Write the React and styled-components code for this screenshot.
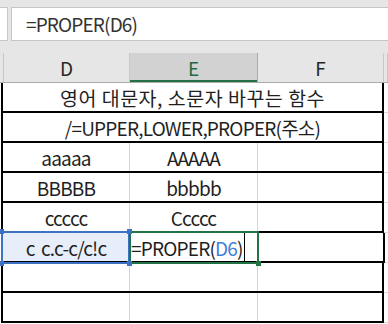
import React from "react";
import styled, { createGlobalStyle, css } from "styled-components";

const GlobalStyle = createGlobalStyle`
  body {
    margin: 0;
    background: #ffffff;
    font-family: "Noto Sans CJK KR", sans-serif;
  }
`;

const Page = styled.div`
  width: 388px;
  height: 324px;
  overflow: hidden;
  background: #ffffff;
`;

const FormulaArea = styled.div`
  display: flex;
  gap: 3px;
  height: 53px;
  padding-top: 7px;
  box-sizing: border-box;
  background: #e6e6e6;
`;

const NameStub = styled.div`
  width: 8px;
  height: 34px;
  box-sizing: border-box;
  background: #fff;
  border: 1px solid #c6c6c6;
  border-left: none;
`;

const FormulaInput = styled.div`
  flex: 1;
  height: 34px;
  box-sizing: border-box;
  background: #fff;
  border: 1px solid #c6c6c6;
  border-right: none;
  padding-left: 14px;
  font-size: 19px;
  letter-spacing: -0.85px;
  line-height: 32px;
  color: #333;
`;

const HeaderRow = styled.div`
  display: flex;
  height: 29px;
  background: #e6e6e6;
  border-bottom: 1px solid #ababab;
`;

const HeadCell = styled.div`
  width: ${(p) => p.$w}px;
  flex: ${(p) => (p.$grow ? 1 : "none")};
  border-right: 1px solid #c8c8c8;
  display: flex;
  align-items: center;
  justify-content: center;
  font-size: 19px;
  color: #262626;
  ${(p) =>
    p.$selected &&
    css`
      background: #d2d2d2;
      color: #1e6b41;
      box-shadow: inset 0 -2px 0 #217346;
      border-right-color: #aaaaaa;
    `}
`;

const Row = styled.div`
  display: flex;
  height: 30px;
`;

const TableRow = styled.div`
  display: flex;
  margin-left: 1px;
  border-left: 2px solid #000;
  border-right: 2px solid #000;
  border-bottom: 2px solid #000;
`;

const Outside = styled.div`
  flex: 1;
  border-bottom: 1px solid #d9d9d9;
  height: 29px;
`;

const Cell = styled.div`
  position: relative;
  width: ${(p) => p.$w}px;
  height: 28px;
  border-right: ${(p) => (p.$last ? "none" : "1px solid #d4d4d4")};
  display: flex;
  align-items: center;
  justify-content: ${(p) => (p.$left ? "flex-start" : "center")};
  padding-left: ${(p) => (p.$left ? "1px" : "0")};
  box-sizing: content-box;
  font-size: ${(p) => (p.$title ? "19.5px" : "19px")};
  letter-spacing: ${(p) => (p.$title ? "0.5px" : "-0.8px")};
  word-spacing: ${(p) => (p.$title ? "0" : "3px")};
  color: #1f1f1f;
  white-space: pre;
  ${(p) =>
    p.$frame === "blue" &&
    css`
      background: #e8eef9;
      &::after {
        content: "";
        position: absolute;
        top: -2px;
        left: -2px;
        right: -1px;
        bottom: -3px;
        border: 2px solid #3b72c4;
      }
    `}
  ${(p) =>
    p.$frame === "green" &&
    css`
      &::after {
        content: "";
        position: absolute;
        top: -2px;
        left: -1px;
        right: -1px;
        bottom: -3px;
        border: 2px solid #217346;
      }
    `}
`;

const Handle = styled.span`
  position: absolute;
  z-index: 2;
  width: 5px;
  height: 5px;
  background: ${(p) => p.$color};
  ${(p) => p.$pos}
`;

const Ref = styled.span`
  color: #3f7fd9;
`;

const Caret = styled.span`
  display: inline-block;
  width: 1px;
  height: 30px;
  margin-left: 1px;
  background: #000;
`;

const COLS = [126, 127, 124];

function PlainRow({ cells }) {
  return (
    <Row>
      <TableRow>
        {cells.map((c, i) => (
          <Cell key={i} $w={COLS[i]} $last={i === 2}>
            {c}
          </Cell>
        ))}
      </TableRow>
      <Outside />
    </Row>
  );
}

function MergedRow({ title, children }) {
  return (
    <Row>
      <TableRow>
        <Cell $w={379} $last $title={title}>
          {children}
        </Cell>
      </TableRow>
      <Outside />
    </Row>
  );
}

export default function App() {
  return (
    <Page>
      <GlobalStyle />
      <FormulaArea>
        <NameStub />
        <FormulaInput>=PROPER(D6)</FormulaInput>
      </FormulaArea>
      <HeaderRow>
        <HeadCell $w={3} />
        <HeadCell $w={125}>D</HeadCell>
        <HeadCell $w={127} $selected>
          E
        </HeadCell>
        <HeadCell $w={125}>F</HeadCell>
        <HeadCell $grow />
      </HeaderRow>
      <MergedRow title>영어 대문자, 소문자 바꾸는 함수</MergedRow>
      <MergedRow>/=UPPER,LOWER,PROPER(주소)</MergedRow>
      <PlainRow cells={["aaaaa", "AAAAA", ""]} />
      <PlainRow cells={["BBBBB", "bbbbb", ""]} />
      <PlainRow cells={["ccccc", "Ccccc", ""]} />
      <Row>
        <TableRow>
          <Cell $w={COLS[0]} $frame="blue">
            c c.c-c/c!c
            <Handle $color="#3b72c4" $pos="top:-4px;left:-4px;" />
            <Handle $color="#3b72c4" $pos="top:-4px;right:-3px;" />
            <Handle $color="#3b72c4" $pos="bottom:-5px;left:-4px;" />
            <Handle $color="#3b72c4" $pos="bottom:-5px;right:-3px;" />
          </Cell>
          <Cell $w={COLS[1]} $frame="green" $left>
            =PROPER(<Ref>D6</Ref>)
            <Caret />
            <Handle $color="#217346" $pos="bottom:-5px;right:-3px;" />
          </Cell>
          <Cell $w={COLS[2]} $last />
        </TableRow>
        <Outside />
      </Row>
      <PlainRow cells={["", "", ""]} />
      <PlainRow cells={["", "", ""]} />
    </Page>
  );
}
